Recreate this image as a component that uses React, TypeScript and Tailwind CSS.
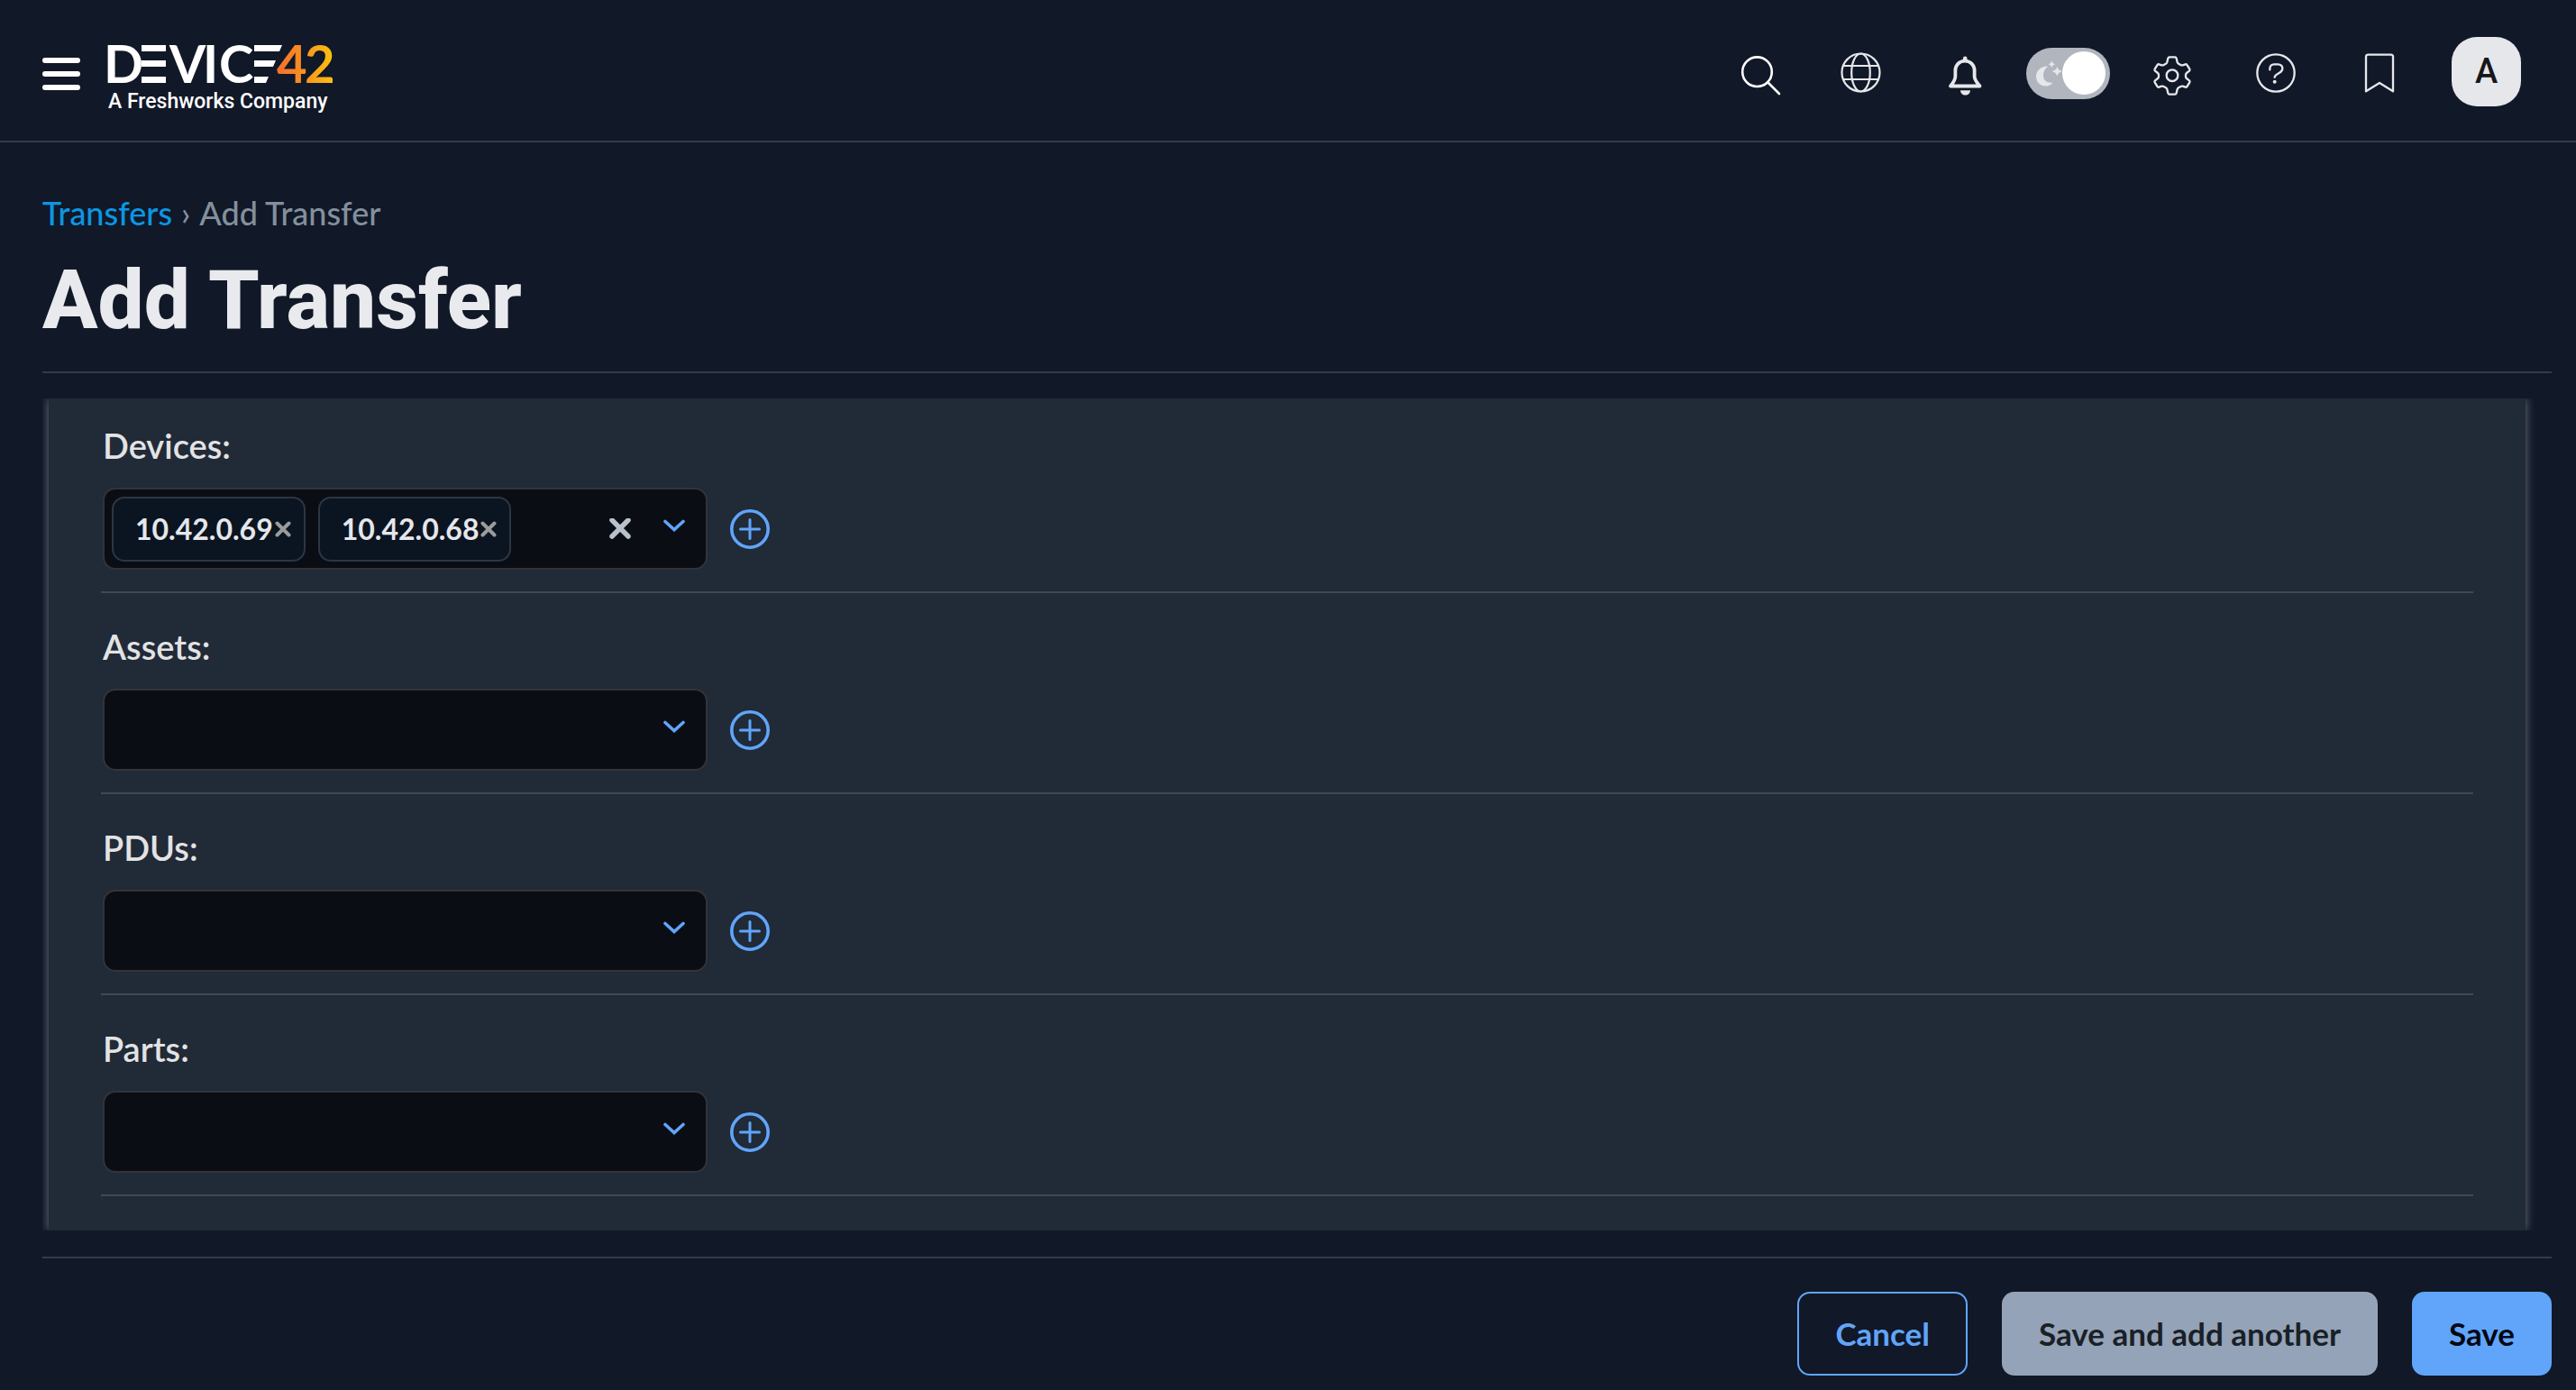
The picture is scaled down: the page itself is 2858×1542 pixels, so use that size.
import { useState } from "react";
import type { ReactNode } from "react";

type FieldProps = {
  id: string;
  label: string;
  initial?: string[];
};

function NavButton({ label, viewBox = "0 0 56 56", children }: { label: string; viewBox?: string; children: ReactNode }) {
  return (
    <button type="button" aria-label={label} className="flex w-[115px] justify-center text-gray-200">
      <svg viewBox={viewBox} className="size-14" fill="none" stroke="currentColor" strokeLinecap="round" strokeLinejoin="round">
        {children}
      </svg>
    </button>
  );
}

function Logo() {
  return (
    <a href="#" className="block whitespace-nowrap text-white">
      <svg viewBox="0 0 252 48" className="block h-12 w-[252px] overflow-visible" fill="currentColor" role="img" aria-label="Device42">
        <defs>
          <linearGradient id="logo-42" gradientUnits="userSpaceOnUse" x1="190" y1="0" x2="250" y2="0">
            <stop offset="0" stopColor="#f4702f" />
            <stop offset="0.5" stopColor="#f9931f" />
            <stop offset="1" stopColor="#fdc010" />
          </linearGradient>
        </defs>
        <g fontFamily="Lato, sans-serif" fontWeight="700" fontSize="58">
          <text x="-4" y="46">D</text>
          <text x="69" y="46">V</text>
          <text x="106" y="46">I</text>
          <text x="124" y="46">C</text>
          <g fill="url(#logo-42)">
            <text x="188" y="46">4</text>
            <text x="219" y="46">2</text>
          </g>
        </g>
        {/* barred E */}
        <rect x="38" y="4" width="27" height="7" />
        <rect x="38" y="21" width="27" height="7" />
        <rect x="38" y="39" width="27" height="7" />
        {/* second E, cut along the slope of the 4 */}
        <path d="M163 4h31l-3 7h-28zM163 21h24l-3 7h-21zM163 39h16l-3 7h-13z" />
      </svg>
      <span className="mt-[5px] block pl-px font-[Roboto,sans-serif] text-[23px] leading-7 font-medium">A Freshworks Company</span>
    </a>
  );
}

function ThemeToggle() {
  const [dark, setDark] = useState(true);
  return (
    <div className="flex w-[115px] justify-center">
      <label className="relative flex h-[57px] w-[93px] cursor-pointer items-center rounded-full bg-[#b1b5bd] p-[5px]">
        <input type="checkbox" aria-label="Dark mode" className="sr-only" checked={dark} onChange={() => setDark(!dark)} />
        <svg viewBox="1072 136 96 92" className="ml-1 h-[31px] w-8 fill-gray-200">
          <path d="M1118 158c-22-1-40 13-40 34 0 19 14 32 32 32 10 0 18-4 24-12-19 3-32-6-32-24 0-13 6-23 16-30z" />
          <path d="M1130 140q2 9 11 11-9 2-11 11-2-9-11-11 9-2 11-11zM1148 159q3 13 17 16-14 3-17 16-3-13-17-16 14-3 17-16z" />
        </svg>
        <span className="absolute right-[5px] size-12 rounded-full bg-white" />
      </label>
    </div>
  );
}

function Header() {
  return (
    <header className="flex h-[158px] items-center border-b-2 border-[#343a49] pr-[61px] pl-[47px]">
      <button type="button" aria-label="Menu" className="mt-2 mr-[30px] flex w-[42px] flex-col gap-[9px]">
        <span className="h-1.5 w-full rounded-full bg-white" />
        <span className="h-1.5 w-full rounded-full bg-white" />
        <span className="h-1.5 w-full rounded-full bg-white" />
      </button>
      <div className="mt-4">
        <Logo />
      </div>

      <nav className="mt-1.5 ml-auto flex items-center">
        <NavButton label="Search">
          <g stroke="#fff" strokeWidth="2.6">
            <circle cx="27.5" cy="26.7" r="16.3" />
            <path d="M39.5 38.5 52 51" />
          </g>
        </NavButton>
        <NavButton label="Language">
          <g strokeWidth="2.2">
            <circle cx="27.500" cy="27.5" r="21" />
            <ellipse cx="27.500" cy="27.5" rx="10.3" ry="21" />
            <path d="M8.500 20h38M8.500 35h38" />
          </g>
        </NavButton>
        <NavButton label="Notifications">
          <path strokeWidth="3.8" d="M28 14.6c-6 0-10.6 4.6-10.6 10.6v6.300c0 4.500-2.600 7.500-5.400 11h32.500c-2.800-3.500-5.900-6.500-5.900-11v-6.300C38.600 19.200 34 14.600 28 14.600z" />
          <path strokeWidth="4.6" d="M28.200 11.800v1" />
          <path stroke="none" fill="currentColor" d="M23 47.200h11c0 3-2.400 5.400-5.500 5.400S23 50.200 23 47.200z" />
        </NavButton>
        <ThemeToggle />
        <NavButton label="Settings" viewBox="66 99 168 168">
          <g strokeWidth="7">
            <path d="M141 130h18q4 0 5 4l3 13q1 4 4 5l7 4q3 2 7 1l9-3q4-1 6 3l8 13q2 4-1 6l-9 7q-3 2-3 6v6q0 4 3 6l9 7q3 3 1 6l-8 13q-2 4-6 3l-9-3q-4-1-7 1l-7 4q-3 1-4 5l-3 13q-1 4-5 4h-18q-4 0-5-4l-3-13q-1-4-4-5l-7-4q-3-2-7-1l-9 3q-4 1-6-3l-8-13q-2-3 1-6l9-7q3-2 3-6v-6q0-4-3-6l-9-7q-3-2-1-6l8-13q2-4 6-3l9 3q4 1 7-1l7-4q3-1 4-5l3-13q1-4 5-4z" />
            <circle cx="150" cy="191" r="19" />
          </g>
        </NavButton>
        <NavButton label="Help" viewBox="410 98 168 168">
          <g strokeWidth="7">
            <circle cx="494" cy="182" r="62" />
            <path d="M474 171v-4c0-8 6-14 14-14h13c9 0 15 6 15 14 0 7-4 11-11 15-9 5-15 7-15 14" />
          </g>
          <circle cx="490" cy="211" r="6" fill="currentColor" stroke="none" />
        </NavButton>
        <NavButton label="Bookmarks" viewBox="756 98 168 168">
          <path strokeWidth="7" d="M795 243V128q0-7 7-7h76q7 0 7 7v115l-45-28z" />
        </NavButton>
        <button
          type="button"
          className="-mt-1 ml-[23px] size-[77px] rounded-[28px] bg-gray-200 font-[Roboto,sans-serif] text-[38px] font-medium text-neutral-900"
        >
          A
        </button>
      </nav>
    </header>
  );
}

function RelatedField({ id, label, initial = [] }: FieldProps) {
  const [items, setItems] = useState(initial);
  return (
    <div className="border-b-2 border-[#3f4855] pt-[35px] pb-6 pl-0.5 first:pt-7">
      <label htmlFor={id} className="block text-[38px] leading-[48px] font-semibold text-[#e2e3e4]">
        {label}:
      </label>
      <div className="mt-[23px] flex items-center gap-[25px]">
        <div className="flex h-[91px] w-[671px] items-center rounded-[14px] border-2 border-[#333438] bg-[#0a0d14] pr-[23px] pl-2">
          {items.map((item) => (
            <span
              key={item}
              className="mr-3.5 flex h-[72px] items-center gap-0.5 rounded-[14px] border-2 border-[#2d3643] bg-[#0b1421] pr-3.5 pl-6 text-[32px] font-bold text-gray-200"
            >
              {item}
              <button type="button" aria-label={"Remove " + item} onClick={() => setItems(items.filter((i) => i !== item))}>
                <svg viewBox="0 0 18 18" className="size-[18px]" stroke="#9b9b9b" strokeWidth="4" strokeLinecap="round">
                  <path d="M2.500 2.500l13 13M15.500 2.500l-13 13" />
                </svg>
              </button>
            </span>
          ))}
          <input id={id} type="text" className="h-full min-w-0 flex-1 bg-transparent text-[32px] text-gray-200 outline-none" />
          {items.length > 0 && (
            <button type="button" aria-label="Clear all" className="mr-9" onClick={() => setItems([])}>
              <svg viewBox="0 0 24 24" className="size-6" stroke="#b9c2cb" strokeWidth="5.500" strokeLinecap="round">
                <path d="M3 2l18 18M21 2L3 20" />
              </svg>
            </button>
          )}
          <button type="button" aria-label={"Show " + label}>
            <svg viewBox="0 0 24 24" className="size-6" fill="none" stroke="#60a5fa" strokeWidth="3.600" strokeLinecap="round">
              <path d="M2 3.500l10 9 10-9" />
            </svg>
          </button>
        </div>
        <button type="button" aria-label={"Add " + label}>
          <svg viewBox="0 0 44 44" className="size-11" fill="none" stroke="#60a5fa" strokeLinecap="round">
            <circle cx="22" cy="22" r="20.200" strokeWidth="3.600" />
            <path strokeWidth="3" d="M22 11.500v21M11.500 22h21" />
          </svg>
        </button>
      </div>
    </div>
  );
}

export default function App() {
  return (
    <div className="min-h-screen bg-[#111827] font-[Lato,sans-serif]">
      <Header />
      <main className="pt-14 pr-[27px] pb-4 pl-[47px]">
        <nav aria-label="Breadcrumb" className="flex gap-2.5 text-[36px] leading-[44px] font-medium text-[#83909c]">
          <a href="#" className="text-[#0c96e2]">
            Transfers
          </a>
          <span>›</span>
          <span>Add Transfer</span>
        </nav>
        <h1 className="mt-[25px] border-b-2 border-[#343a49] pb-[29px] font-[Roboto,sans-serif] text-[91px] leading-[100px] font-extrabold text-[#e9eaee]">
          Add Transfer
        </h1>

        <form onSubmit={(e) => e.preventDefault()}>
          <div className="mt-7 overflow-hidden pr-[29px] pl-[7px]">
            <div className="bg-[#212a37] px-[58px] pb-[38px] shadow-[0_0_10px_rgba(255,255,255,0.4)]">
              <RelatedField id="devices" label="Devices" initial={["10.42.0.69", "10.42.0.68"]} />
              <RelatedField id="assets" label="Assets" />
              <RelatedField id="pdus" label="PDUs" />
              <RelatedField id="parts" label="Parts" />
            </div>
          </div>

          <div className="mt-[29px] flex justify-end gap-[38px] border-t-2 border-[#343a49] pt-[37px] text-[35px] font-bold">
            <button type="button" className="h-[93px] rounded-[14px] border-2 border-[#60a5fa] px-10 text-[#60a5fa]">
              Cancel
            </button>
            <button type="submit" className="h-[93px] rounded-[14px] bg-[#94a3b8] px-[41px] text-[#1a2026]">
              Save and add another
            </button>
            <button type="submit" className="h-[93px] rounded-[14px] bg-[#60a5fa] px-[41px] text-gray-950">
              Save
            </button>
          </div>
        </form>
      </main>
    </div>
  );
}
